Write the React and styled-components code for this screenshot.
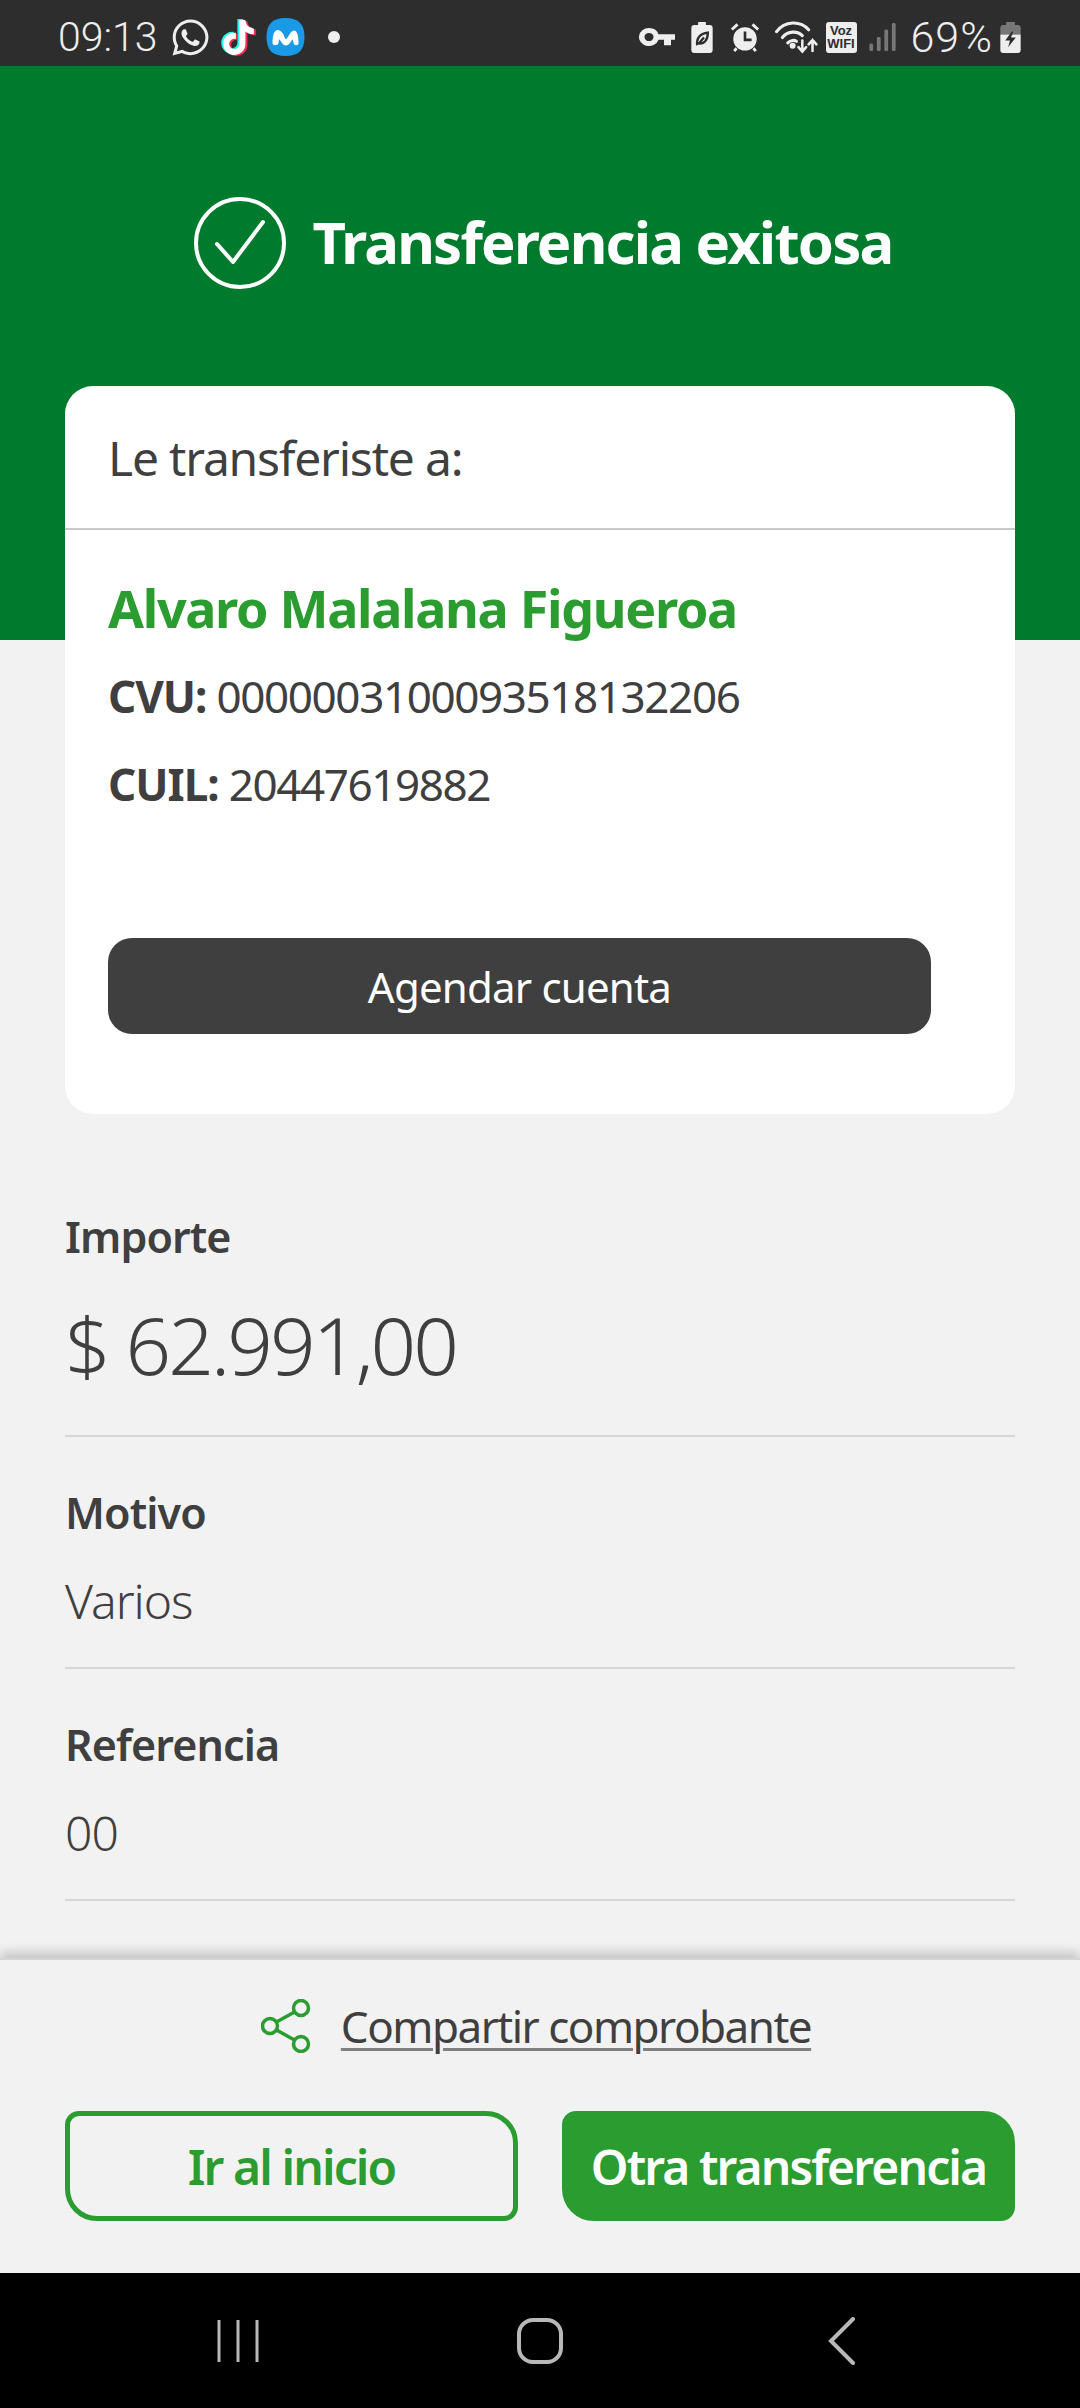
import styled, { createGlobalStyle } from 'styled-components';
import { FaWhatsapp, FaTiktok } from 'react-icons/fa';

const Global = createGlobalStyle`
  html, body { margin: 0; padding: 0; background: #f2f2f2; }
  * { box-sizing: border-box; }
  body { font-family: "Noto Sans", "Open Sans", sans-serif; color: #3f3f3f; }
`;

const Page = styled.div`
  width: 1080px;
  height: 2408px;
  display: flex;
  flex-direction: column;
  overflow: hidden;
  background: #f2f2f2;
`;

const StatusBar = styled.div`
  height: 66px;
  flex: none;
  background: #2d2d2d;
  color: #eeeeee;
  display: flex;
  align-items: center;
  justify-content: space-between;
  padding: 8px 59px 0 58px;
  font-family: "Roboto", sans-serif;
`;
const StatusGroup = styled.div`
  display: flex;
  align-items: center;
`;
const Slot = styled.span`
  display: flex;
  margin-left: ${p => p.$left || 0}px;
`;
const StatusText = styled.span`
  font-size: ${p => p.$size || 41}px;
  line-height: 1;
  font-weight: 300;
  margin-left: ${p => p.$left || 0}px;
  letter-spacing: ${p => p.$spacing || 0}px;
`;
const Dot = styled.span`
  width: 12px;
  height: 12px;
  border-radius: 50%;
  background: #eeeeee;
  margin-left: 23px;
`;
const TikTokIcon = styled.span`
  position: relative;
  width: 35px;
  height: 38px;
  display: block;
  margin-left: 10px;
  svg { position: absolute; left: 0; top: 0; }
`;

const Hero = styled.div`
  height: 574px;
  flex: none;
  background: #007a2d;
  display: flex;
  justify-content: center;
  align-items: flex-start;
  padding: 130px 0 0 5px;
  gap: 26px;
`;
const HeroTitle = styled.h1`
  margin: 0;
  color: #fff;
  font-size: 58px;
  line-height: 92px;
  font-weight: 700;
  letter-spacing: -1.8px;
`;

const Card = styled.section`
  margin: -254px 65px 0;
  height: 728px;
  flex: none;
  background: #fff;
  border-radius: 28px;
`;
const CardHead = styled.div`
  height: 144px;
  border-bottom: 2px solid #c9c9c9;
  padding: 0 43px;
  display: flex;
  align-items: center;
  font-size: 48px;
  letter-spacing: -1.2px;
`;
const CardBody = styled.div`
  padding: 46px 43px 0;
`;
const Name = styled.div`
  color: #2b9c30;
  font-size: 52px;
  line-height: 64px;
  font-weight: 700;
  letter-spacing: -1.3px;
`;
const Account = styled.div`
  font-size: 44px;
  line-height: 88px;
  margin-top: ${p => p.$top || 0}px;
  letter-spacing: -1.4px;
  b { font-weight: 700; letter-spacing: -1px; }
`;
const DarkButton = styled.button`
  display: block;
  width: 823px;
  height: 96px;
  margin-top: 110px;
  border: 0;
  border-radius: 24px;
  background: #3f3f3f;
  color: #fff;
  font: inherit;
  font-size: 42px;
  letter-spacing: -0.8px;
`;

const Details = styled.div`
  flex: 1;
  padding: 93px 65px 0;
`;
const Detail = styled.div`
  border-bottom: 2px solid #d6d6d6;
  padding-bottom: ${p => p.$large ? 36 : 28}px;
  margin-bottom: 46px;
`;
const Label = styled.div`
  font-size: 43px;
  line-height: 60px;
  font-weight: 600;
  letter-spacing: -0.9px;
`;
const Value = styled.div`
  font-size: ${p => p.$large ? 80 : 48}px;
  line-height: ${p => p.$large ? 110 : 76}px;
  margin-top: ${p => p.$large ? 22 : 20}px;
  font-weight: 300;
  letter-spacing: ${p => p.$large ? -3 : -1}px;
`;

const Footer = styled.footer`
  height: 315px;
  flex: none;
  background: #f2f2f2;
  padding: 0 65px;
  border-top: 2px solid #d4d4d4;
  box-shadow: 0 -6px 10px rgba(0,0,0,0.18);
`;
const Share = styled.div`
  height: 134px;
  margin-bottom: 17px;
  padding: 0 8px 2px 0;
  display: flex;
  align-items: center;
  justify-content: center;
  gap: 30px;
`;
const ShareLink = styled.a`
  font-size: 44px;
  letter-spacing: -1.5px;
  color: #3f3f3f;
  text-decoration: underline #808080;
  text-decoration-thickness: 3px;
  text-underline-offset: 5px;
`;
const Buttons = styled.div`
  display: grid;
  grid-template-columns: 453px 453px;
  justify-content: space-between;
`;
const ActionButton = styled.button`
  height: 110px;
  border-radius: 14px 32px 14px 32px;
  border: 5px solid #2b9c30;
  background: ${p => p.$filled ? '#2b9c30' : 'transparent'};
  color: ${p => p.$filled ? '#fff' : '#2b9c30'};
  font: inherit;
  font-size: 48px;
  font-weight: 600;
  letter-spacing: -1.9px;
  padding: 0;
  white-space: nowrap;
`;

const NavBar = styled.nav`
  height: 135px;
  flex: none;
  background: #000;
  display: grid;
  grid-template-columns: repeat(3, 1fr);
  align-items: center;
  justify-items: center;
  padding: 0 87px;
`;

const Check = () => (
  <svg width="94" height="94" viewBox="0 0 94 94" fill="none" stroke="#fff" strokeWidth="4" strokeLinecap="round" strokeLinejoin="round">
    <circle cx="47" cy="47" r="44" />
    <path d="M24 48 L40 66 L70 26" />
  </svg>
);

const ShareIcon = () => (
  <svg width="50" height="54" viewBox="0 0 50 54" fill="none" stroke="#2b9c30" strokeWidth="3.5">
    <circle cx="40" cy="9" r="7.5" />
    <circle cx="9" cy="27" r="7.5" />
    <circle cx="40" cy="45" r="7.5" />
    <path d="M15.5 23 L33.5 13 M15.5 31 L33.5 41" />
  </svg>
);

const Movistar = () => (
  <svg width="39" height="38" viewBox="0 0 38 38">
    <path d="M19 0C32 0 38 6 38 19S32 38 19 38 0 32 0 19 6 0 19 0Z" fill="#1a9ae6" />
    <path d="M6 25C6 13 10 10 14 13S18 21 19.5 21 23 15 26 13 32 14 32 25c0 3-4.500 3-5 0-.3-2-.5-3.500-1-3.500-1 0-2.500 6-6.500 6s-5.500-6-6.500-6c-.6 0-.7 1.500-1 3.500-.5 3-6 3-6 0Z" fill="#fff" />
  </svg>
);

const KeyIcon = () => (
  <svg width="36" height="20" viewBox="0 0 36 22" preserveAspectRatio="none" fill="#eee">
    <path fillRule="evenodd" d="M10 1a10 10 0 0 1 9.500 7H36v6h-4v6h-7v-6h-5.500A10 10 0 1 1 10 1Zm0 5.500a4.500 4.500 0 1 0 0 9 4.500 4.500 0 0 0 0-9Z" />
  </svg>
);

const LeafBattery = () => (
  <svg width="22" height="31" viewBox="0 0 22 32">
    <path d="M7 0h8v3h4a3 3 0 0 1 3 3v23a3 3 0 0 1-3 3H3a3 3 0 0 1-3-3V6a3 3 0 0 1 3-3h4Z" fill="#eee" />
    <path d="M6 24C5 15 10 12 17 11 17 19 13 23 8 22L13 16" fill="none" stroke="#2d2d2d" strokeWidth="2.4" />
  </svg>
);

const Alarm = () => (
  <svg width="30" height="30" viewBox="0 0 32 32">
    <circle cx="16" cy="18" r="12.500" fill="#eee" />
    <path d="M2 8 8 2.500M30 8 24 2.500M7 28 4.500 31M25 28l2.500 3" stroke="#eee" strokeWidth="3" fill="none" />
    <path d="M16 10v9h7" stroke="#2d2d2d" strokeWidth="2.800" fill="none" />
  </svg>
);

const Wifi = () => (
  <svg width="43" height="33" viewBox="0 0 44 34" fill="none" stroke="#eee" strokeWidth="3.200" strokeLinecap="round">
    <path d="M1.500 11C10-.5 26-.5 34.500 9" />
    <path d="M7.500 17C13 10 23 10 28 15" />
    <path d="M13 22.500C16 19.500 20 19.500 22 21" />
    <circle cx="18" cy="25.500" r="1.500" fill="#eee" />
    <path d="M28 20v11M24 27l4 4.500 4-4.500" strokeWidth="2.600" />
    <path d="M38.500 31V19.500M34.500 24l4-4.500 4 4.500" strokeWidth="2.600" />
  </svg>
);

const VozTag = styled.span`
  width: 31px;
  height: 31px;
  margin-left: 8px;
  border-radius: 3px;
  background: #eee;
  color: #2d2d2d;
  display: flex;
  flex-direction: column;
  align-items: center;
  justify-content: center;
  font: 700 13px/13px "Liberation Sans", sans-serif;
`;

const Signal = () => (
  <svg width="27" height="30" viewBox="0 0 28 32" fill="#777">
    <rect x="0" y="23" width="4" height="8" rx="1.500" />
    <rect x="8" y="16" width="4" height="15" rx="1.500" />
    <rect x="16" y="8" width="4" height="23" rx="1.500" />
    <rect x="24" y="1" width="4" height="30" rx="1.500" />
  </svg>
);

const BatteryIcon = () => (
  <svg width="21" height="31" viewBox="0 0 21 32">
    <path d="M6 0h9v3h3a3 3 0 0 1 3 3v7H0V6a3 3 0 0 1 3-3h3Z" fill="#777" />
    <path d="M0 13h21v16a3 3 0 0 1-3 3H3a3 3 0 0 1-3-3Z" fill="#eee" />
    <path d="M12.500 9 5 19h5l-2 7 8-10h-5l2-5Z" fill="#2d2d2d" />
  </svg>
);

const NavRecents = () => (
  <svg width="42" height="44" viewBox="0 0 42 44" stroke="#b8b8b8" strokeWidth="3" fill="none">
    <path d="M2 1v42M21 1v42M40 1v42" />
  </svg>
);
const NavHome = () => (
  <svg width="46" height="46" viewBox="0 0 46 46" fill="none" stroke="#b8b8b8" strokeWidth="4">
    <rect x="2" y="2" width="42" height="42" rx="14" />
  </svg>
);
const NavBack = () => (
  <svg width="28" height="48" viewBox="0 0 28 48" fill="none" stroke="#b8b8b8" strokeWidth="4" strokeLinecap="round">
    <path d="M25 2 3 24l22 22" />
  </svg>
);

export default function App() {
  return (
    <Page>
      <Global />
      <StatusBar>
        <StatusGroup>
          <StatusText>09:13</StatusText>
          <Slot $left={12}><FaWhatsapp size={41} color="#eee" /></Slot>
          <TikTokIcon>
            <FaTiktok size={35} color="#25f4ee" style={{ left: -2, top: 1 }} />
            <FaTiktok size={35} color="#fe2c55" style={{ left: 2, top: 3 }} />
            <FaTiktok size={35} color="#fff" style={{ left: 0, top: 2 }} />
          </TikTokIcon>
          <Slot $left={10}><Movistar /></Slot>
          <Dot />
        </StatusGroup>
        <StatusGroup>
          <KeyIcon />
          <Slot $left={16}><LeafBattery /></Slot>
          <Slot $left={17}><Alarm /></Slot>
          <Slot $left={15}><Wifi /></Slot>
          <VozTag><span>Voz</span><span>WIFI</span></VozTag>
          <Slot $left={12}><Signal /></Slot>
          <StatusText $left={15} $size={43} $spacing={1}>69%</StatusText>
          <Slot $left={7}><BatteryIcon /></Slot>
        </StatusGroup>
      </StatusBar>

      <Hero>
        <Check />
        <HeroTitle>Transferencia exitosa</HeroTitle>
      </Hero>

      <Card>
        <CardHead>Le transferiste a:</CardHead>
        <CardBody>
          <Name>Alvaro Malalana Figueroa</Name>
          <Account $top={12}><b>CVU:</b> 0000003100093518132206</Account>
          <Account><b>CUIL:</b> 20447619882</Account>
          <DarkButton>Agendar cuenta</DarkButton>
        </CardBody>
      </Card>

      <Details>
        <Detail $large>
          <Label>Importe</Label>
          <Value $large>$ 62.991,00</Value>
        </Detail>
        <Detail>
          <Label>Motivo</Label>
          <Value>Varios</Value>
        </Detail>
        <Detail>
          <Label>Referencia</Label>
          <Value>00</Value>
        </Detail>
      </Details>

      <Footer>
        <Share>
          <ShareIcon />
          <ShareLink>Compartir comprobante</ShareLink>
        </Share>
        <Buttons>
          <ActionButton>Ir al inicio</ActionButton>
          <ActionButton $filled>Otra transferencia</ActionButton>
        </Buttons>
      </Footer>

      <NavBar>
        <NavRecents />
        <NavHome />
        <NavBack />
      </NavBar>
    </Page>
  );
}
